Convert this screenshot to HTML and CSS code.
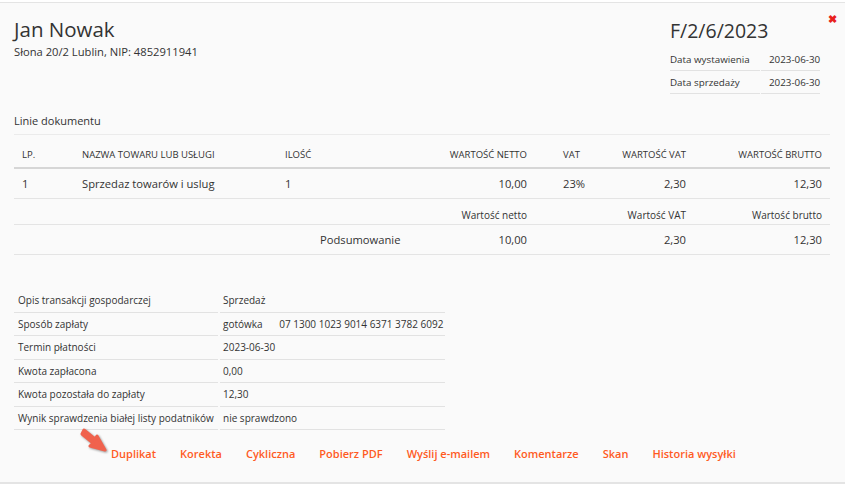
FILE: index.html
```html
<!DOCTYPE html>
<html lang="pl">
<head>
    <meta charset="UTF-8">
    <title>Faktura F/2/6/2023</title>
    <link rel="stylesheet" href="styles.css">
</head>
<body>
    <div class="panel">
        <a class="close" href="#">&#x2716;</a>

        <div class="head">
            <div class="buyer">
                <h1 class="buyer-name">Jan Nowak</h1>
                <p class="buyer-addr">Słona 20/2 Lublin, NIP: 4852911941</p>
            </div>
            <div class="docinfo">
                <h2 class="docno">F/2/6/2023</h2>
                <table class="dates">
                    <tr><td>Data wystawienia</td><td>2023-06-30</td></tr>
                    <tr><td>Data sprzedaży</td><td>2023-06-30</td></tr>
                </table>
            </div>
        </div>

        <p class="section">Linie dokumentu</p>
        <table class="lines">
            <colgroup>
                <col class="c-lp">
                <col class="c-name">
                <col class="c-qty">
                <col class="c-net">
                <col class="c-vat">
                <col class="c-vatv">
                <col class="c-gross">
            </colgroup>
            <thead>
                <tr>
                    <th>LP.</th>
                    <th>NAZWA TOWARU LUB USŁUGI</th>
                    <th>ILOŚĆ</th>
                    <th class="num">WARTOŚĆ NETTO</th>
                    <th class="vat">VAT</th>
                    <th class="num">WARTOŚĆ VAT</th>
                    <th class="num">WARTOŚĆ BRUTTO</th>
                </tr>
            </thead>
            <tbody>
                <tr class="item">
                    <td>1</td>
                    <td>Sprzedaz towarów i uslug</td>
                    <td>1</td>
                    <td class="num">10,00</td>
                    <td class="vat">23%</td>
                    <td class="num">2,30</td>
                    <td class="num">12,30</td>
                </tr>
                <tr class="sumlabels">
                    <td></td><td></td><td></td>
                    <td class="num">Wartość netto</td>
                    <td></td>
                    <td class="num">Wartość VAT</td>
                    <td class="num">Wartość brutto</td>
                </tr>
                <tr class="sum">
                    <td></td><td></td>
                    <td class="sumtitle">Podsumowanie</td>
                    <td class="num">10,00</td>
                    <td></td>
                    <td class="num">2,30</td>
                    <td class="num">12,30</td>
                </tr>
            </tbody>
        </table>

        <table class="details">
            <tr><td>Opis transakcji gospodarczej</td><td>Sprzedaż</td></tr>
            <tr><td>Sposób zapłaty</td><td>gotówka <span class="account">07 1300 1023 9014 6371 3782 6092</span></td></tr>
            <tr><td>Termin płatności</td><td>2023-06-30</td></tr>
            <tr><td>Kwota zapłacona</td><td>0,00</td></tr>
            <tr><td>Kwota pozostała do zapłaty</td><td>12,30</td></tr>
            <tr><td>Wynik sprawdzenia białej listy podatników</td><td>nie sprawdzono</td></tr>
        </table>

        <div class="actions">
            <a href="#" class="dup">Duplikat
                <svg class="arrow" width="30" height="28" viewBox="0 0 30 28">
                    <path d="M4 4 L15 13 L17 10 L25 24 L10 20 L13 17 L2 8 Z" fill="#f0624d" stroke="#f0624d" stroke-width="3" stroke-linejoin="round"/>
                </svg>
            </a>
            <a href="#">Korekta</a>
            <a href="#">Cykliczna</a>
            <a href="#">Pobierz PDF</a>
            <a href="#">Wyślij e-mailem</a>
            <a href="#">Komentarze</a>
            <a href="#">Skan</a>
            <a href="#">Historia wysyłki</a>
        </div>
    </div>
</body>
</html>
```

FILE: styles.css
```css
* {
    margin: 0;
    padding: 0;
    box-sizing: border-box;
}

body {
    background: #fff;
    font-family: "Open Sans", "Liberation Sans", sans-serif;
    color: #333;
}

.panel {
    position: relative;
    width: 845px;
    height: 482px;
    margin-top: 2px;
    background: #fafafa;
    border-top: 1px solid #e4e4e4;
    border-bottom: 2px solid #e4e4e4;
    padding: 0 15px 0 14px;
}

.close {
    position: absolute;
    top: 8px;
    right: 8px;
    color: #e8211d;
    font-size: 11px;
    font-weight: bold;
    text-decoration: none;
}

/* header */
.head {
    display: flex;
    justify-content: space-between;
}

.buyer-name {
    font-size: 20.5px;
    font-weight: normal;
    line-height: 28px;
    margin-top: 12px;
}

.buyer-addr {
    font-size: 11.2px;
    margin-top: 1px;
}

.docinfo {
    width: 160px;
}

.docno {
    font-size: 19.5px;
    font-weight: normal;
    line-height: 28px;
    margin-top: 14px;
}

.dates {
    border-collapse: separate;
    border-spacing: 1px 0;
    margin-left: -1px;
    font-size: 9.8px;
    margin-top: 3px;
}

.dates td {
    height: 23px;
    border-bottom: 1px solid #e2e2e2;
    vertical-align: middle;
}

.dates td:first-child {
    width: 90px;
}

.dates td:last-child {
    padding-left: 8px;
}

.section {
    font-size: 11px;
    margin-top: 19px;
}

/* lines table */
.lines {
    width: 816px;
    table-layout: fixed;
    border-collapse: collapse;
    margin-top: 6px;
    font-size: 11.2px;
    border-top: 1px solid #ebebeb;
}

.c-lp { width: 60px; }
.c-name { width: 203px; }
.c-qty { width: 138px; }
.c-net { width: 120px; }
.c-vat { width: 60px; }
.c-vatv { width: 99px; }
.c-gross { width: 136px; }

.lines th {
    font-size: 9.5px;
    font-weight: normal;
    text-align: left;
    height: 33px;
    padding: 8px 8px 0;
    border-bottom: 2px solid #d6d6d6;
    white-space: nowrap;
}

.lines td {
    padding: 0 8px;
    border-bottom: 1px solid #e4e4e4;
    white-space: nowrap;
}

.lines .num {
    text-align: right;
}

.lines .vat {
    padding-left: 28px;
}

.item td {
    height: 31px;
}

.sumlabels td {
    height: 26px;
    font-size: 10px;
    vertical-align: bottom;
    padding-bottom: 2px;
}

.sum td {
    height: 30px;
}

.lines .sumtitle {
    padding-left: 43px;
}

/* details */
.details {
    border-collapse: separate;
    border-spacing: 2px 0;
    margin-left: -2px;
    margin-top: 34px;
    font-size: 10px;
}

.details td {
    height: 23.5px;
    border-bottom: 1px solid #e2e2e2;
    padding-left: 4px;
    vertical-align: middle;
    white-space: nowrap;
}

.details td:first-child {
    width: 204px;
}

.details td:last-child {
    width: 225px;
    padding-left: 3px;
}

.account {
    margin-left: 14px;
}

/* actions */
.actions {
    display: flex;
    gap: 24px;
    margin-top: 16px;
    padding-left: 97px;
}

.actions a {
    color: #ff5a1f;
    font-size: 11px;
    font-weight: 600;
    text-decoration: none;
}

.dup {
    position: relative;
}

.arrow {
    position: absolute;
    left: -31px;
    top: -20px;
    filter: drop-shadow(1px 1px 1px rgba(0,0,0,0.4));
}
```
